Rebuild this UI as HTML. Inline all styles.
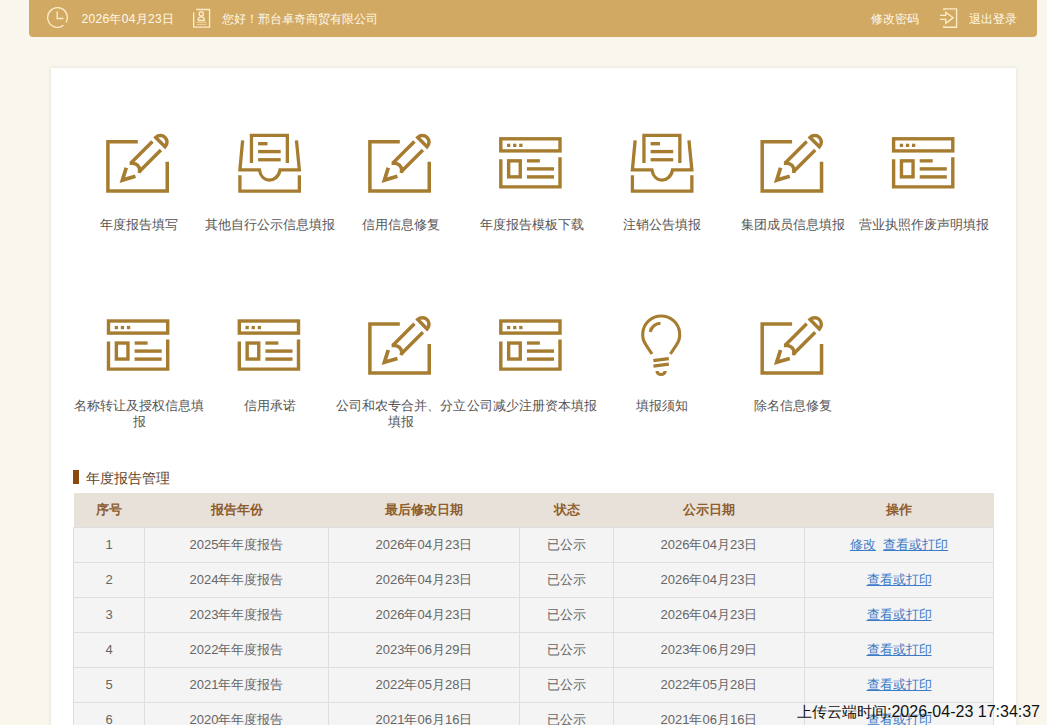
<!DOCTYPE html>
<html><head><meta charset="utf-8">
<style>
*{margin:0;padding:0;box-sizing:border-box}
html,body{width:1047px;height:725px;overflow:hidden;background:#f9f6ee;font-family:"Liberation Sans",sans-serif}
.abs{position:absolute}
#hdr{position:absolute;left:29px;top:0;width:1008px;height:37px;background:#d2a963;border-radius:0 0 4px 4px}
.ht{position:absolute;top:12px;font-weight:500;font-size:12px;line-height:14px;color:#fff9ea;white-space:nowrap}
#card{position:absolute;left:51px;top:68px;width:965px;height:700px;background:#fff;box-shadow:0 0 4px rgba(0,0,0,.1)}
.lbl{position:absolute;width:140px;text-align:center;font-size:13px;line-height:16px;color:#555;white-space:nowrap}
#sec{position:absolute;left:73px;top:470px;width:6px;height:14px;background:#8a4a0e}
#sectt{position:absolute;left:86px;top:468.5px;font-size:14px;line-height:18px;color:#5e4124;white-space:nowrap}
table{position:absolute;left:73px;top:493px;border-collapse:collapse;table-layout:fixed;width:920px}
th{height:34px;background:#e8e1da;color:#8d5d2d;font-size:13px;font-weight:bold;padding:0;text-align:center;white-space:nowrap}
td{height:35px;background:#f4f4f4;border:1px solid #dedede;color:#666;font-size:13px;padding:0;text-align:center;white-space:nowrap}
a{color:#3d7bc6;text-decoration:underline}
#wm{position:absolute;left:797px;top:701.5px;font-size:16px;line-height:20px;color:#111;white-space:nowrap}
</style></head><body>
<div id="hdr">
  <svg class="abs" style="left:0;top:0" width="1008" height="37" viewBox="29 0 1008 37">
    <g fill="none" stroke="#fcecc8" stroke-width="1.35">
      <path d="M 63.53 25.22 A 9.8 9.8 0 1 1 65.99 22.4"/>
      <path d="M 57.2 11.5 V 18.5 H 63.5"/>
      <path d="M 196.3 9.45 H 209.55 V 27.05 H 193.65 V 12.3"/>
      <circle cx="201.3" cy="13.9" r="2.1"/>
      <path d="M 198.3 20.5 V 19.6 Q 198.3 16.8 201.3 16.8 Q 204.3 16.8 204.3 19.6 V 20.5 Z"/>
      <path d="M 196.7 22.6 H 206.3 M 196.7 24.5 H 206.3" stroke-width="1" stroke-opacity=".6"/>
      <path d="M 943.9 10.3 V 8.8 H 956.6 V 27.2 H 943.9 V 25.7"/>
      <path d="M 940 15.4 H 945.8 V 12.3 L 953.1 17.8 L 945.8 23.3 V 19.4 H 940" stroke-linejoin="miter"/>
    </g>
  </svg>
  <div class="ht" style="left:52.5px;letter-spacing:.3px">2026年04月23日</div>
  <div class="ht" style="left:193px">您好！邢台卓奇商贸有限公司</div>
  <div class="ht" style="left:842px">修改密码</div>
  <div class="ht" style="left:939.5px;letter-spacing:.3px">退出登录</div>
</div>
<div id="card"></div>

<svg class="abs" style="left:0;top:0" width="1047" height="725" viewBox="0 0 1047 725">
  <defs>
    <g id="edit" fill="none" stroke="#a67d30" stroke-width="3.5">
      <path d="M 137.8 141.8 H 107.9 V 190.9 H 167.25 V 161.7" stroke-linejoin="miter"/>
      <path d="M 126.26 167.75 L 122.37 180.13 L 135.46 176.24" stroke-linejoin="miter" stroke-width="3.7"/>
      <path d="M 152.43 141.59 L 130.9 163.1"/>
      <path d="M 138.9 172 L 160.91 150.07"/>
      <path d="M 129.6 163.3 L 132.6 163.3 A 7 7 0 0 1 139.7 170.3 L 139.3 173.1" stroke-linejoin="round"/>
      <path d="M 155.75 137.41 L 165.09 146.75 A 6.6 6.6 0 0 0 155.75 137.41 Z"/>
    </g>
    <g id="inbox" fill="none" stroke="#a67d30" stroke-width="3.3">
      <path d="M 251.45 163 V 135.45 H 287.35 V 163"/>
      <path d="M 242.65 140.4 L 239.9 169.95 H 259.4 C 260.6 176.8, 265 180.2, 269.4 180.2 C 274 180.2, 279 176.5, 280 169.95 H 299.35 L 296.45 140.4"/>
      <path d="M 239.9 175.2 V 191.15 H 299.35 V 175.2"/>
      <g fill="#a67d30" stroke="none">
        <rect x="258.1" y="142" width="9.4" height="3.4"/>
        <rect x="258.1" y="149.9" width="22.6" height="3.4"/>
        <rect x="258.1" y="158.1" width="22.6" height="3.3"/>
      </g>
    </g>
    <g id="browser" fill="none" stroke="#a67d30" stroke-width="3.4">
      <rect x="500.8" y="138.8" width="59.2" height="12.1"/>
      <path d="M 500.8 159.2 V 186.9 H 560 V 157.3"/>
      <rect x="508.65" y="160.85" width="11.6" height="16"/>
      <g fill="#a67d30" stroke="none">
        <rect x="507" y="143.7" width="3.3" height="3.3"/>
        <rect x="513.1" y="143.7" width="3.3" height="3.3"/>
        <rect x="519.2" y="143.7" width="3.3" height="3.3"/>
        <rect x="526.9" y="159.2" width="13" height="3.3"/>
        <rect x="526.9" y="167.2" width="27.1" height="3.4"/>
        <rect x="526.9" y="175.2" width="27.1" height="3.4"/>
      </g>
    </g>
    <g id="bulb" fill="none" stroke="#a67d30" stroke-width="3.1">
      <path d="M 652 354 L 646.1 345.2 A 18.5 18.5 0 1 1 676.3 345.2 L 670.4 354"/>
      <path d="M 650.2 331.8 A 11 11 0 0 1 660.5 323.3"/>
      <path d="M 653.4 360.6 L 668.8 358.6 M 653.4 366.1 L 668.8 364.1" stroke-width="3.4"/>
      <path d="M 657 371 A 4.1 3.5 0 0 0 665.2 371" stroke-width="3.2"/>
    </g>
  </defs>
  <!-- row 1 -->
  <use href="#edit"/>
  <use href="#inbox"/>
  <use href="#edit" transform="translate(262 0)"/>
  <use href="#browser"/>
  <use href="#inbox" transform="translate(392.5 0)"/>
  <use href="#edit" transform="translate(654.3 0)"/>
  <use href="#browser" transform="translate(392.8 0)"/>
  <!-- row 2 -->
  <use href="#browser" transform="translate(-392.3 182.2)"/>
  <use href="#browser" transform="translate(-261.5 182.2)"/>
  <use href="#edit" transform="translate(262 182.2)"/>
  <use href="#browser" transform="translate(0 182.2)"/>
  <use href="#bulb"/>
  <use href="#edit" transform="translate(654.3 182.2)"/>
</svg>

<div class="lbl" style="left:68.5px;top:217px">年度报告填写</div>
<div class="lbl" style="left:199.5px;top:217px">其他自行公示信息填报</div>
<div class="lbl" style="left:330.5px;top:217px">信用信息修复</div>
<div class="lbl" style="left:461.5px;top:217px">年度报告模板下载</div>
<div class="lbl" style="left:592px;top:217px">注销公告填报</div>
<div class="lbl" style="left:723px;top:217px">集团成员信息填报</div>
<div class="lbl" style="left:854px;top:217px">营业执照作废声明填报</div>

<div class="lbl" style="left:69px;top:398px">名称转让及授权信息填<br>报</div>
<div class="lbl" style="left:200px;top:398px">信用承诺</div>
<div class="lbl" style="left:331px;top:398px">公司和农专合并、分立<br>填报</div>
<div class="lbl" style="left:461.5px;top:398px">公司减少注册资本填报</div>
<div class="lbl" style="left:592px;top:398px">填报须知</div>
<div class="lbl" style="left:723px;top:398px">除名信息修复</div>

<div id="sec"></div>
<div id="sectt">年度报告管理</div>

<table>
<colgroup><col style="width:71px"><col style="width:184px"><col style="width:191px"><col style="width:94px"><col style="width:191px"><col style="width:189px"></colgroup>
<tr><th>序号</th><th>报告年份</th><th>最后修改日期</th><th>状态</th><th>公示日期</th><th>操作</th></tr>
<tr><td>1</td><td>2025年年度报告</td><td>2026年04月23日</td><td>已公示</td><td>2026年04月23日</td><td><a>修改</a>&nbsp;&nbsp;<a>查看或打印</a></td></tr>
<tr><td>2</td><td>2024年年度报告</td><td>2026年04月23日</td><td>已公示</td><td>2026年04月23日</td><td><a>查看或打印</a></td></tr>
<tr><td>3</td><td>2023年年度报告</td><td>2026年04月23日</td><td>已公示</td><td>2026年04月23日</td><td><a>查看或打印</a></td></tr>
<tr><td>4</td><td>2022年年度报告</td><td>2023年06月29日</td><td>已公示</td><td>2023年06月29日</td><td><a>查看或打印</a></td></tr>
<tr><td>5</td><td>2021年年度报告</td><td>2022年05月28日</td><td>已公示</td><td>2022年05月28日</td><td><a>查看或打印</a></td></tr>
<tr><td>6</td><td>2020年年度报告</td><td>2021年06月16日</td><td>已公示</td><td>2021年06月16日</td><td><a>查看或打印</a></td></tr>
</table>

<div id="wm"><span style="font-size:15px">上传云端时间</span>:2026-04-23 17:34:37</div>
</body></html>
